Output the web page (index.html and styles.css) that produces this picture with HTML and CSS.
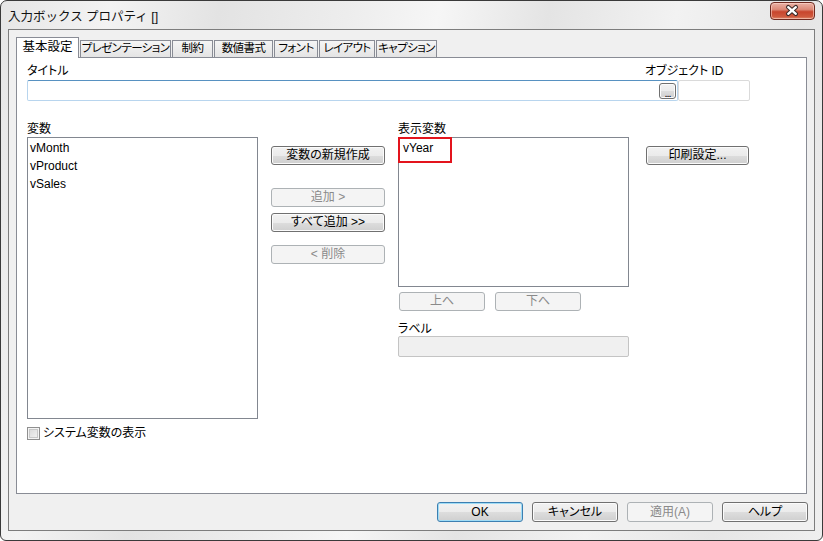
FILE: index.html
```html
<!DOCTYPE html>
<html lang="ja">

<head>
    <meta charset="UTF-8" />
    <title>入力ボックス プロパティ []</title>
    <link rel="stylesheet" href="styles.css">
</head>

<body>
    <div class="window">
        <div class="titlebar">
            <span class="title">入力ボックス プロパティ []</span>
            <button class="close" title="閉じる">
                <svg width="45" height="18" viewBox="0 0 45 18">
                    <path d="M18 5 L26 12 M26 5 L18 12" stroke="#3a2a28" stroke-width="4.6" stroke-linecap="round" fill="none" />
                    <path d="M18 5 L26 12 M26 5 L18 12" stroke="#ffffff" stroke-width="2.4" stroke-linecap="round" fill="none" />
                </svg>
            </button>
        </div>

        <div class="client">
            <div class="tabs">
                <div class="tab active">基本設定</div>
                <div class="tab">プレゼンテーション</div>
                <div class="tab">制約</div>
                <div class="tab">数値書式</div>
                <div class="tab">フォント</div>
                <div class="tab">レイアウト</div>
                <div class="tab">キャプション</div>
            </div>

            <div class="panel">
                <div class="label-row">
                    <span class="label title-label">タイトル</span>
                    <span class="label">オブジェクト ID</span>
                </div>
                <div class="input-row">
                    <div class="textbox focused">
                        <button class="btn dots">...</button>
                    </div>
                    <div class="textbox id-box"></div>
                </div>

                <div class="main">
                    <div class="col col-vars">
                        <div class="label">変数</div>
                        <div class="listbox vars">
                            <div class="list-item">vMonth</div>
                            <div class="list-item">vProduct</div>
                            <div class="list-item">vSales</div>
                        </div>
                        <label class="check-row">
                            <span class="checkbox"></span>
                            <span>システム変数の表示</span>
                        </label>
                    </div>

                    <div class="col col-actions">
                        <button class="btn">変数の新規作成</button>
                        <button class="btn disabled gap-big">追加 &gt;</button>
                        <button class="btn gap-small">すべて追加 &gt;&gt;</button>
                        <button class="btn disabled gap-mid">&lt; 削除</button>
                    </div>

                    <div class="col col-shown">
                        <div class="label">表示変数</div>
                        <div class="listbox shown">
                            <div class="list-item">vYear</div>
                            <div class="highlight"></div>
                        </div>
                        <div class="move-row">
                            <button class="btn disabled">上へ</button>
                            <button class="btn disabled">下へ</button>
                        </div>
                        <div class="label label-gap">ラベル</div>
                        <div class="textbox disabled-box"></div>
                    </div>

                    <div class="col col-print">
                        <button class="btn">印刷設定...</button>
                    </div>
                </div>
            </div>

            <div class="actions">
                <button class="btn default">OK</button>
                <button class="btn">キャンセル</button>
                <button class="btn disabled">適用(A)</button>
                <button class="btn">ヘルプ</button>
            </div>
        </div>
    </div>
</body>

</html>
```

FILE: styles.css
```css
* {
    box-sizing: border-box;
}

body {
    margin: 0;
    padding: 0;
    width: 823px;
    height: 541px;
    overflow: hidden;
    font-family: 'Liberation Sans', 'Noto Sans CJK JP', sans-serif;
    font-size: 12px;
    color: #000;
    background: #fff;
}

.window {
    width: 823px;
    height: 541px;
    padding: 0 7px 9px 7px;
    border: 1px solid #3a3a3a;
    border-radius: 7px 7px 6px 6px;
    background: linear-gradient(100deg, #e6e6e6 0%, #f3f3f3 12%, #e3e3e3 24%, #ededed 38%, #f6f6f6 48%, #e4e4e4 60%, #f2f2f2 74%, #e6e6e6 88%, #efefef 100%);
}

.titlebar {
    height: 28px;
    display: flex;
    justify-content: space-between;
    align-items: flex-start;
}

.title {
    padding-top: 9px;
    line-height: 14px;
    font-size: 12.5px;
    color: #111;
}

.close {
    width: 45px;
    height: 18px;
    margin-top: 1px;
    padding: 0;
    border: 1px solid #6e2a20;
    border-radius: 4px;
    background: linear-gradient(#eab1a5 0%, #dc8a78 40%, #c8452d 55%, #cf5a3e 85%, #e08a6e 100%);
    box-shadow: inset 0 0 0 1px rgba(255, 220, 210, 0.55);
    display: flex;
    align-items: center;
    justify-content: center;
}

.close svg {
    display: block;
}

/* client area */
.client {
    height: 502px;
    border: 1px solid #7d7d7d;
    background: #f0f0f0;
    padding: 7px 6px 8px 7px;
}

.tabs {
    display: flex;
    align-items: flex-end;
    gap: 1px;
    height: 20px;
}

.tab {
    height: 17px;
    line-height: 15px;
    text-align: center;
    border: 1px solid #898c95;
    border-bottom: none;
    background: linear-gradient(#f5f5f5, #e4e4e4);
    white-space: nowrap;
    overflow: hidden;
    font-size: 11.5px;
    font-feature-settings: "palt";
    letter-spacing: -0.6px;
}

.tab.active {
    height: 21px;
    line-height: 19px;
    margin-bottom: -1px;
    background: #fff;
    position: relative;
    z-index: 1;
    font-size: 12.5px;
    letter-spacing: 0;
}

.tab:nth-child(1) { width: 63px; }
.tab:nth-child(2) { width: 91px; }
.tab:nth-child(3) { width: 41px; }
.tab:nth-child(4) { width: 59px; }
.tab:nth-child(5) { width: 44px; }
.tab:nth-child(6) { width: 56px; }
.tab:nth-child(7) { width: 61px; }

.panel {
    width: 791px;
    height: 437px;
    border: 1px solid #898c95;
    background: #fff;
    padding: 6px 0 0 10px;
}

.label {
    line-height: 14px;
    height: 14px;
    white-space: nowrap;
    font-feature-settings: "palt";
}

.label-row {
    display: flex;
    margin-bottom: 2px;
}

.title-label {
    width: 618px;
}

.input-row {
    display: flex;
}

.textbox {
    height: 21px;
    border: 1px solid #abadb3;
    border-radius: 2px;
    background: #fff;
}

.textbox.focused {
    width: 651px;
    border-color: #5791c1 #b8d5ee #b8d5ee #b8d5ee;
    display: flex;
    justify-content: flex-end;
    align-items: center;
    padding-right: 1px;
}

.textbox.id-box {
    width: 72px;
    border-color: #dadada;
}

.textbox.disabled-box {
    width: 231px;
    border-color: #c4c4c4;
    background: #f0f0f0;
}

/* buttons */
.btn {
    display: block;
    height: 19px;
    padding: 0;
    font-family: inherit;
    font-size: 12px;
    line-height: 15px;
    color: #000;
    border: 1px solid #707070;
    border-radius: 3px;
    background: linear-gradient(#f2f2f2 0%, #ebebeb 50%, #dddddd 51%, #cfcfcf 100%);
    box-shadow: inset 0 0 0 1px #fbfbfb;
    white-space: nowrap;
    font-feature-settings: "palt";
}

.btn.disabled {
    color: #8a8a8a;
    border-color: #adb2b5;
    background: #f4f4f4;
    box-shadow: none;
}

.btn.default {
    border-color: #3c7fb1;
    box-shadow: inset 0 0 0 1px #9fdcf6;
}

.btn.dots {
    width: 17px;
    height: 16px;
    font-size: 11px;
    line-height: 18px;
    letter-spacing: -1px;
}

/* main section */
.main {
    display: flex;
    align-items: flex-start;
    margin-top: 21px;
}

.listbox {
    border: 1px solid #828790;
    background: #fff;
    margin-top: 1px;
    padding: 1px 0 0 2px;
    position: relative;
}

.list-item {
    line-height: 18px;
    height: 18px;
}

.col-vars {
    width: 231px;
}

.listbox.vars {
    height: 282px;
}

.check-row {
    display: flex;
    align-items: center;
    gap: 3px;
    margin-top: 8px;
    height: 13px;
    line-height: 13px;
    font-feature-settings: "palt";
}

.checkbox {
    width: 13px;
    height: 13px;
    border: 1px solid #8f8f8f;
    background: linear-gradient(135deg, #d6d6d6, #f6f6f6);
    box-shadow: inset 0 0 0 1px #f4f4f4, inset 0 0 0 2px #c8c8c8;
}

.col-actions {
    width: 114px;
    margin-left: 13px;
    padding-top: 24px;
}

.col-actions .btn {
    width: 114px;
}

.gap-big {
    margin-top: 23px;
}

.gap-small {
    margin-top: 6px;
}

.gap-mid {
    margin-top: 13px;
}

.col-shown {
    width: 231px;
    margin-left: 13px;
}

.listbox.shown {
    height: 150px;
    padding-left: 4px;
}

.highlight {
    position: absolute;
    left: -1px;
    top: -1px;
    width: 54px;
    height: 26px;
    border: 2px solid #e3141d;
}

.move-row {
    display: flex;
    gap: 10px;
    margin-top: 5px;
    padding-left: 1px;
}

.move-row .btn {
    width: 86px;
}

.label-gap {
    margin-top: 11px;
}

.col-print {
    margin-left: 17px;
    padding-top: 24px;
}

.col-print .btn {
    width: 103px;
}

/* bottom buttons */
.actions {
    display: flex;
    justify-content: flex-end;
    gap: 9px;
    margin-top: 8px;
}

.actions .btn {
    width: 86px;
    height: 20px;
    line-height: 16px;
}
```
